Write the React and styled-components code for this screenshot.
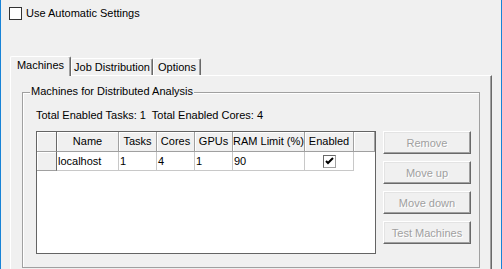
import React from 'react'
import styled, { createGlobalStyle } from 'styled-components'

const GlobalStyle = createGlobalStyle`
  html, body {
    margin: 0;
    padding: 0;
    background: #f0f0f0;
  }
  * {
    box-sizing: border-box;
  }
`

const Window = styled.div`
  width: 502px;
  height: 269px;
  overflow: hidden;
  background: #f0f0f0;
  border-left: 1px solid #1883d7;
  border-right: 1px solid #1883d7;
  font-family: 'Liberation Sans', Arial, sans-serif;
  font-size: 11px;
  line-height: 13px;
  color: #000;
`

const CheckRow = styled.label`
  display: flex;
  align-items: center;
  height: 13px;
  margin-top: 7px;
  padding-left: 8px;
`

const Box = styled.span`
  display: flex;
  align-items: center;
  justify-content: center;
  width: 13px;
  height: 13px;
  flex-shrink: 0;
  background: #fff;
  border: 1px solid ${p => (p.$sunken ? '#a0a0a0' : '#333')};
  border-top-color: ${p => (p.$sunken ? '#696969' : '#333')};
  border-left-color: ${p => (p.$sunken ? '#696969' : '#333')};
`

const CheckLabel = styled.span`
  margin-left: 4px;
`

const TabStrip = styled.div`
  display: flex;
  align-items: flex-end;
  height: 19px;
  margin: 36px 9px 0 9px;
`

const Tab = styled.div`
  position: relative;
  z-index: ${p => (p.$active ? 1 : 0)};
  width: ${p => p.$width}px;
  height: ${p => (p.$active ? 20 : 17)}px;
  margin-bottom: ${p => (p.$active ? -1 : 0)}px;
  display: flex;
  align-items: center;
  justify-content: center;
  padding-bottom: ${p => (p.$active ? 2 : 0)}px;
  background: #f0f0f0;
  border-top: 1px solid #fff;
  border-left: 1px solid #fff;
  border-right: 1px solid #696969;
  border-top-left-radius: 2px;
  border-top-right-radius: 2px;
  box-shadow: inset -1px 0 0 #a0a0a0;
  white-space: nowrap;
`

const Panel = styled.div`
  height: 200px;
  margin: 0 9px;
  padding: 16px 11px 0 11px;
  border-top: 1px solid #fff;
  border-left: 1px solid #fff;
  border-right: 1px solid #696969;
  box-shadow: inset -1px 0 0 #a0a0a0;
`

const Group = styled.div`
  display: flex;
  flex-direction: column;
  padding: 0 8px 13px 13px;
  border: 1px solid #a0a0a0;
  box-shadow: inset 1px 1px 0 #fff;
`

const Legend = styled.div`
  align-self: flex-start;
  margin: -8px 0 0 -6px;
  padding: 0 1px;
  background: #f0f0f0;
`

const Totals = styled.div`
  margin-top: 11px;
  white-space: pre;
`

const Body = styled.div`
  display: flex;
  gap: 7px;
  margin-top: 9px;
`

const Grid = styled.div`
  width: 340px;
  height: 123px;
  background: #fff;
  border: 1px solid #646464;
`

const Row = styled.div`
  display: flex;
  height: ${p => p.$height}px;
`

const HeadCell = styled.div`
  width: ${p => p.$width}px;
  display: flex;
  align-items: center;
  justify-content: center;
  background: #f0f0f0;
  border-right: 1px solid ${p => (p.$dark ? '#696969' : '#a0a0a0')};
  border-bottom: 1px solid #a0a0a0;
  box-shadow: inset 1px 1px 0 #fff;
  white-space: nowrap;
`

const Cell = styled.div`
  width: ${p => p.$width}px;
  display: flex;
  align-items: center;
  justify-content: ${p => (p.$center ? 'center' : 'flex-start')};
  padding-left: ${p => (p.$center ? 0 : 1)}px;
  border-right: 1px solid #c8c8c8;
  border-bottom: 1px solid #c8c8c8;
`

const Buttons = styled.div`
  display: flex;
  flex-direction: column;
  gap: 7px;
`

const Button = styled.button`
  width: 88px;
  height: 23px;
  padding: 0;
  font-family: inherit;
  font-size: 11px;
  color: #a0a0a0;
  text-shadow: 1px 1px 0 #fff;
  background: #f0f0f0;
  border: 1px solid #fff;
  border-right-color: #696969;
  border-bottom-color: #696969;
  box-shadow: inset -1px -1px 0 #a0a0a0, inset 1px 1px 0 #e3e3e3;
`

const columns = [
  { label: 'Name', width: 62 },
  { label: 'Tasks', width: 38 },
  { label: 'Cores', width: 38 },
  { label: 'GPUs', width: 38 },
  { label: 'RAM Limit (%)', width: 72 },
  { label: 'Enabled', width: 49 },
]

const rows = [{ name: 'localhost', tasks: '1', cores: '4', gpus: '1', ram: '90', enabled: true }]

const buttons = ['Remove', 'Move up', 'Move down', 'Test Machines']

const Check = () => (
  <svg width="9" height="9" viewBox="0 0 9 9">
    <path d="M1 4 L3 6 L8 1" stroke="#000" strokeWidth="2" fill="none" />
  </svg>
)

const App = () => (
  <Window>
    <GlobalStyle />
    <CheckRow>
      <Box />
      <CheckLabel>Use Automatic Settings</CheckLabel>
    </CheckRow>

    <TabStrip>
      <Tab $active $width={61}>Machines</Tab>
      <Tab $width={82}>Job Distribution</Tab>
      <Tab $width={48}>Options</Tab>
    </TabStrip>

    <Panel>
      <Group>
        <Legend>Machines for Distributed Analysis</Legend>
        <Totals>Total Enabled Tasks: 1  Total Enabled Cores: 4</Totals>
        <Body>
          <Grid>
            <Row $height={20}>
              <HeadCell $width={20} $dark />
              {columns.map(c => (
                <HeadCell key={c.label} $width={c.width}>
                  {c.label}
                </HeadCell>
              ))}
              <HeadCell $width={21} />
            </Row>
            {rows.map(r => (
              <Row key={r.name} $height={19}>
                <HeadCell $width={20} $dark />
                <Cell $width={62}>{r.name}</Cell>
                <Cell $width={38}>{r.tasks}</Cell>
                <Cell $width={38}>{r.cores}</Cell>
                <Cell $width={38}>{r.gpus}</Cell>
                <Cell $width={72}>{r.ram}</Cell>
                <Cell $width={49} $center>
                  <Box $sunken>{r.enabled && <Check />}</Box>
                </Cell>
              </Row>
            ))}
          </Grid>
          <Buttons>
            {buttons.map(b => (
              <Button key={b} disabled>
                {b}
              </Button>
            ))}
          </Buttons>
        </Body>
      </Group>
    </Panel>
  </Window>
)

export default App
